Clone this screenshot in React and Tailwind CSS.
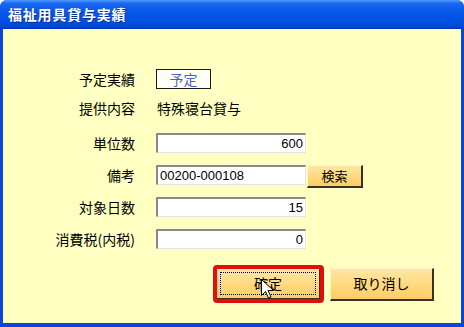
import React from "react";

const jp = { fontFamily: '"Noto Sans CJK JP", "Noto Sans", sans-serif' };

const Field = ({ value, align = "right" }) => (
  <div
    className={`w-[150px] h-[20px] bg-white border-t-2 border-l-2 border-b border-r border-t-[#8a8a8a] border-l-[#8a8a8a] border-b-[#e4e4e4] border-r-[#e4e4e4] flex items-center px-[2px] text-[13px] text-black ${
      align === "right" ? "justify-end" : "justify-start"
    }`}
    style={{ fontFamily: '"Liberation Sans", Arial, sans-serif' }}
  >
    {value}
  </div>
);

const Label = ({ children }) => (
  <div className="w-[133px] pr-[1px] text-right text-[14px] text-black leading-none" style={jp}>
    {children}
  </div>
);

const Cursor = () => (
  <svg width="13" height="20" viewBox="0 0 13 20" className="absolute left-[44px] top-[10px]">
    <path
      d="M0.5 0.5 L0.5 16.5 L4.5 12.5 L7.5 19 L10 18 L7 11.5 L12.5 11.5 Z"
      fill="#fff"
      stroke="#000"
      strokeWidth="1"
      strokeLinejoin="miter"
    />
  </svg>
);

export default function App() {
  return (
    <div className="w-[464px] h-[327px] bg-white overflow-hidden">
      <div className="w-[464px] h-[327px] flex flex-col rounded-t-[7px] overflow-hidden bg-[#0845d8]">
        {/* title bar */}
        <div className="h-[29px] shrink-0 bg-[linear-gradient(to_bottom,#4f9bff_0%,#1a66f0_12%,#0758e8_40%,#0050e2_75%,#0046d2_92%,#0038b8_100%)] flex items-center pl-[8px]">
          <span
            className="text-white text-[14px] font-bold tracking-[0.8px] [text-shadow:1px_1px_0_#0a2c8c]"
            style={jp}
          >
            福祉用具貸与実績
          </span>
        </div>

        {/* body */}
        <div className="flex-1 mx-[3px] mb-[4px] bg-[#ffffc2] flex flex-col pt-[40px]">
          <div className="flex items-center h-[20px] gap-[20px]">
            <Label>予定実績</Label>
            <div
              className="w-[55px] h-[20px] border border-[#1a1a1a] bg-[#fffff6] flex items-center justify-center text-[14px] text-[#4a64c0]"
              style={jp}
            >
              予定
            </div>
          </div>

          <div className="flex items-center h-[20px] gap-[20px] mt-[9px]">
            <Label>提供内容</Label>
            <div className="text-[14px] text-black leading-none pl-[1px]" style={jp}>
              特殊寝台貸与
            </div>
          </div>

          <div className="flex items-center h-[20px] gap-[20px] mt-[15px]">
            <Label>単位数</Label>
            <Field value="600" />
          </div>

          <div className="flex items-start h-[20px] gap-[20px] mt-[12px]">
            <div className="h-[20px] flex items-center">
              <Label>備考</Label>
            </div>
            <div className="flex items-start gap-[1px]">
              <Field value="00200-000108" align="left" />
              <button
                className="w-[56px] h-[23px] bg-[linear-gradient(to_bottom,#ffe7a6,#ffd779_60%,#fccd68)] border-t border-l border-t-[#fff4cc] border-l-[#fff4cc] border-b-2 border-r-2 border-b-[#3a3020] border-r-[#3a3020] text-[13px] text-black flex items-center justify-center"
                style={jp}
              >
                検索
              </button>
            </div>
          </div>

          <div className="flex items-center h-[20px] gap-[20px] mt-[12px]">
            <Label>対象日数</Label>
            <Field value="15" />
          </div>

          <div className="flex items-center h-[20px] gap-[20px] mt-[12px]">
            <Label>消費税(内税)</Label>
            <Field value="0" />
          </div>

          {/* buttons */}
          <div className="flex items-center mt-[16px] pl-[210px] gap-[6px]">
            <div className="relative w-[111px] h-[38px] rounded-[4px] border-[4px] border-[#e30d0d] flex">
              <button
                className="flex-1 bg-[linear-gradient(to_bottom,#ffe7a6,#ffd779_60%,#fccd68)] border-b border-r border-b-[#3a3020] border-r-[#3a3020] text-[14px] text-black flex items-center justify-center p-[3px]"
                style={jp}
              >
                <span className="w-full h-full border border-dotted border-black flex items-center justify-center">
                  確定
                </span>
              </button>
              <Cursor />
            </div>
            <button
              className="w-[104px] h-[33px] bg-[linear-gradient(to_bottom,#ffe7a6,#ffd779_60%,#fccd68)] border-t border-l border-t-[#fff4cc] border-l-[#fff4cc] border-b-2 border-r-2 border-b-[#3a3020] border-r-[#3a3020] text-[14px] text-black flex items-center justify-center"
              style={jp}
            >
              取り消し
            </button>
          </div>
        </div>
      </div>
    </div>
  );
}
